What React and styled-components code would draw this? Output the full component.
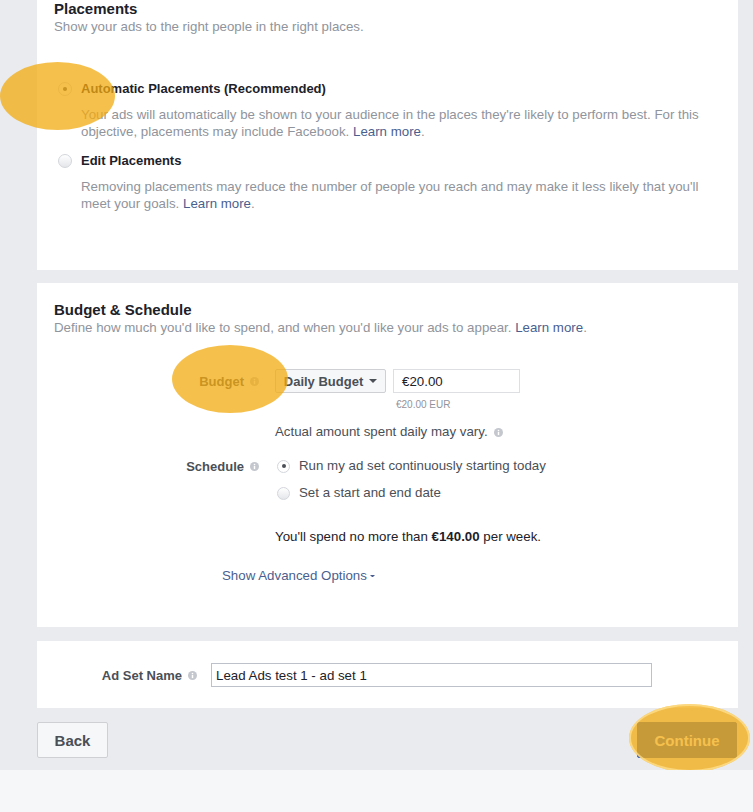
import React from "react";
import styled, { createGlobalStyle } from "styled-components";

const GlobalStyle = createGlobalStyle`
  html, body {
    margin: 0;
    padding: 0;
    background: #f6f7f9;
    font-family: "Liberation Sans", Arial, sans-serif;
  }
`;

const Page = styled.div`
  background: #e9ebee;
  padding: 0 15px 12px 37px;
  display: flex;
  flex-direction: column;
`;

const Card = styled.section`
  background: #ffffff;
  padding: ${(p) => p.$pad};
  margin-top: ${(p) => p.$mt || 0}px;
`;

const Title = styled.h2`
  margin: 0;
  font-size: 15px;
  line-height: 18px;
  font-weight: bold;
  color: #1d2129;
`;

const Sub = styled.p`
  margin: 0;
  font-size: 13.3px;
  line-height: 18px;
  color: #90949c;
`;

const Link = styled.a`
  color: #4a5f8f;
  text-decoration: none;
`;

const OptionList = styled.div`
  margin-top: 44px;
  display: flex;
  flex-direction: column;
  gap: 12px;
`;

const Option = styled.div`
  position: relative;
  display: grid;
  grid-template-columns: 14px 1fr;
  column-gap: 9px;
  padding-left: 4px;
`;

const OptionLabel = styled.div`
  font-size: 13px;
  line-height: 18px;
  font-weight: bold;
  color: #1d2129;
`;

const OptionDesc = styled.div`
  grid-column: 2;
  margin-top: 8px;
  font-size: 13.3px;
  line-height: 17px;
  color: #90949c;
`;

const Radio = styled.span`
  width: ${(p) => p.$size}px;
  height: ${(p) => p.$size}px;
  margin-top: ${(p) => (18 - p.$size) / 2}px;
  box-sizing: border-box;
  border-radius: 50%;
  border: 1px solid #d3d6db;
  background: ${(p) =>
    p.$checked ? "#ffffff" : "linear-gradient(#ffffff, #e4e6ea)"};
  display: flex;
  align-items: center;
  justify-content: center;
  flex-shrink: 0;
  &::after {
    content: "";
    width: 4px;
    height: 4px;
    border-radius: 50%;
    background: #4b4f56;
    display: ${(p) => (p.$checked ? "block" : "none")};
  }
`;

const Highlight = styled.span`
  position: absolute;
  left: ${(p) => p.$x}px;
  top: ${(p) => p.$y}px;
  width: ${(p) => p.$w}px;
  height: 68px;
  border-radius: 50%;
  background: rgba(243, 171, 16, 0.75);
  box-shadow: ${(p) =>
    p.$ring ? "inset 0 0 0 2px rgba(255, 226, 150, 0.7)" : "none"};
  pointer-events: none;
  z-index: 2;
`;

const FieldRow = styled.div`
  display: grid;
  grid-template-columns: ${(p) => p.$label}px 1fr;
  column-gap: ${(p) => p.$gap}px;
  margin-top: ${(p) => p.$mt || 0}px;
`;

const FieldLabel = styled.div`
  position: relative;
  display: flex;
  justify-content: flex-end;
  align-items: center;
  gap: 6px;
  height: ${(p) => p.$h}px;
  font-size: 13px;
  font-weight: bold;
  color: #4b4f56;
`;

const Controls = styled.div`
  display: flex;
  flex-direction: column;
`;

const InlineRow = styled.div`
  display: flex;
  align-items: center;
  gap: 7px;
`;

const Dropdown = styled.button`
  width: 111px;
  height: 24px;
  box-sizing: border-box;
  display: flex;
  align-items: center;
  justify-content: center;
  gap: 6px;
  background: #f6f7f9;
  border: 1px solid #ced0d4;
  border-radius: 2px;
  font-family: inherit;
  font-size: 13px;
  font-weight: bold;
  color: #4b4f56;
  padding: 0;
`;

const TextBox = styled.div`
  width: ${(p) => p.$w}px;
  height: 24px;
  box-sizing: border-box;
  border: 1px solid ${(p) => p.$border};
  display: flex;
  align-items: center;
  padding-left: ${(p) => p.$pl}px;
  font-size: 13.3px;
  color: #1d2129;
`;

const Note = styled.div`
  margin-top: 6px;
  margin-left: ${(p) => p.$ml || 0}px;
  font-size: 10px;
  line-height: 12px;
  color: #90949c;
`;

const Text = styled.div`
  display: flex;
  align-items: center;
  gap: 6px;
  margin-top: ${(p) => p.$mt || 0}px;
  font-size: 13.3px;
  line-height: 18px;
  color: ${(p) => p.$color || "#1d2129"};
`;

const RadioStack = styled.div`
  display: flex;
  flex-direction: column;
  gap: 9px;
  padding-left: 2px;
`;

const RadioRow = styled.label`
  display: flex;
  gap: 9px;
  font-size: 13.3px;
  line-height: 18px;
  color: #4b4f56;
`;

const Advanced = styled.div`
  margin-top: 21px;
  padding-left: 168px;
  font-size: 13.3px;
  line-height: 18px;
  color: #4a5f8f;
  display: flex;
  align-items: center;
  gap: 3px;
`;

const ButtonBar = styled.div`
  margin-top: 14px;
  display: flex;
  justify-content: space-between;
  align-items: center;
`;

const Button = styled.button`
  position: relative;
  height: 36px;
  width: ${(p) => p.$w}px;
  box-sizing: border-box;
  border-radius: 2px;
  font-family: inherit;
  font-size: 15px;
  font-weight: bold;
  padding: 0;
  background: ${(p) => (p.$primary ? "#4267b2" : "#f6f7f9")};
  color: ${(p) => (p.$primary ? "#ffffff" : "#4b4f56")};
  border: 1px solid ${(p) => (p.$primary ? "#4267b2" : "#ced0d4")};
  margin-right: ${(p) => p.$mr || 0}px;
`;

const InfoIcon = () => (
  <svg width="9" height="9" viewBox="0 0 10 10">
    <circle cx="5" cy="5" r="5" fill="#c4c7cd" />
    <rect x="4.2" y="4.3" width="1.6" height="3.6" fill="#fff" />
    <circle cx="5" cy="2.8" r="0.9" fill="#fff" />
  </svg>
);

const Caret = ({ color = "#4b4f56", w = 8 }) => (
  <svg width={w} height={w / 2} viewBox="0 0 8 4">
    <path d="M0 0 L8 0 L4 4 Z" fill={color} />
  </svg>
);

export default function App() {
  return (
    <>
      <GlobalStyle />
      <Page>
        <Card $pad="0 17px 58px">
          <Title>Placements</Title>
          <Sub>Show your ads to the right people in the right places.</Sub>
          <OptionList>
            <Option>
              <Highlight $x={-54} $y={-18} $w={115} />
              <Radio $size={14} $checked />
              <OptionLabel>Automatic Placements (Recommended)</OptionLabel>
              <OptionDesc>
                Your ads will automatically be shown to your audience in the
                places they're likely to perform best. For this objective,
                placements may include Facebook. <Link>Learn more</Link>.
              </OptionDesc>
            </Option>
            <Option>
              <Radio $size={14} />
              <OptionLabel>Edit Placements</OptionLabel>
              <OptionDesc>
                Removing placements may reduce the number of people you reach
                and may make it less likely that you'll meet your goals.{" "}
                <Link>Learn more</Link>.
              </OptionDesc>
            </Option>
          </OptionList>
        </Card>

        <Card $pad="18px 17px 42px" $mt={13}>
          <Title>Budget &amp; Schedule</Title>
          <Sub>
            Define how much you'd like to spend, and when you'd like your ads
            to appear. <Link>Learn more</Link>.
          </Sub>

          <FieldRow $label={205} $gap={16} $mt={32}>
            <FieldLabel $h={24}>
              <Highlight $x={118} $y={-24} $w={116} />
              Budget <InfoIcon />
            </FieldLabel>
            <Controls>
              <InlineRow>
                <Dropdown>
                  Daily Budget <Caret />
                </Dropdown>
                <TextBox $w={127} $border="#dddfe2" $pl={8}>
                  €20.00
                </TextBox>
              </InlineRow>
              <Note $ml={121}>€20.00 EUR</Note>
              <Text $mt={12} $color="#4b4f56">
                Actual amount spent daily may vary. <InfoIcon />
              </Text>
            </Controls>
          </FieldRow>

          <FieldRow $label={205} $gap={16} $mt={16}>
            <FieldLabel $h={18}>
              Schedule <InfoIcon />
            </FieldLabel>
            <RadioStack>
              <RadioRow>
                <Radio $size={13} $checked />
                Run my ad set continuously starting today
              </RadioRow>
              <RadioRow>
                <Radio $size={13} />
                Set a start and end date
              </RadioRow>
            </RadioStack>
          </FieldRow>

          <FieldRow $label={205} $gap={16} $mt={26}>
            <span />
            <Text>
              <span>
                You'll spend no more than <b>€140.00</b> per week.
              </span>
            </Text>
          </FieldRow>

          <Advanced>
            Show Advanced Options <Caret color="#4a5f8f" w={5} />
          </Advanced>
        </Card>

        <Card $pad="22px 17px 21px" $mt={14}>
          <FieldRow $label={143} $gap={14}>
            <FieldLabel $h={24}>
              Ad Set Name <InfoIcon />
            </FieldLabel>
            <TextBox $w={441} $border="#bdc1c9" $pl={4}>
              Lead Ads test 1 - ad set 1
            </TextBox>
          </FieldRow>
        </Card>

        <ButtonBar>
          <Button $w={71}>Back</Button>
          <Button $w={100} $primary $mr={1}>
            Continue
            <Highlight $x={-9} $y={-19} $w={121} $ring />
          </Button>
        </ButtonBar>
      </Page>
    </>
  );
}
